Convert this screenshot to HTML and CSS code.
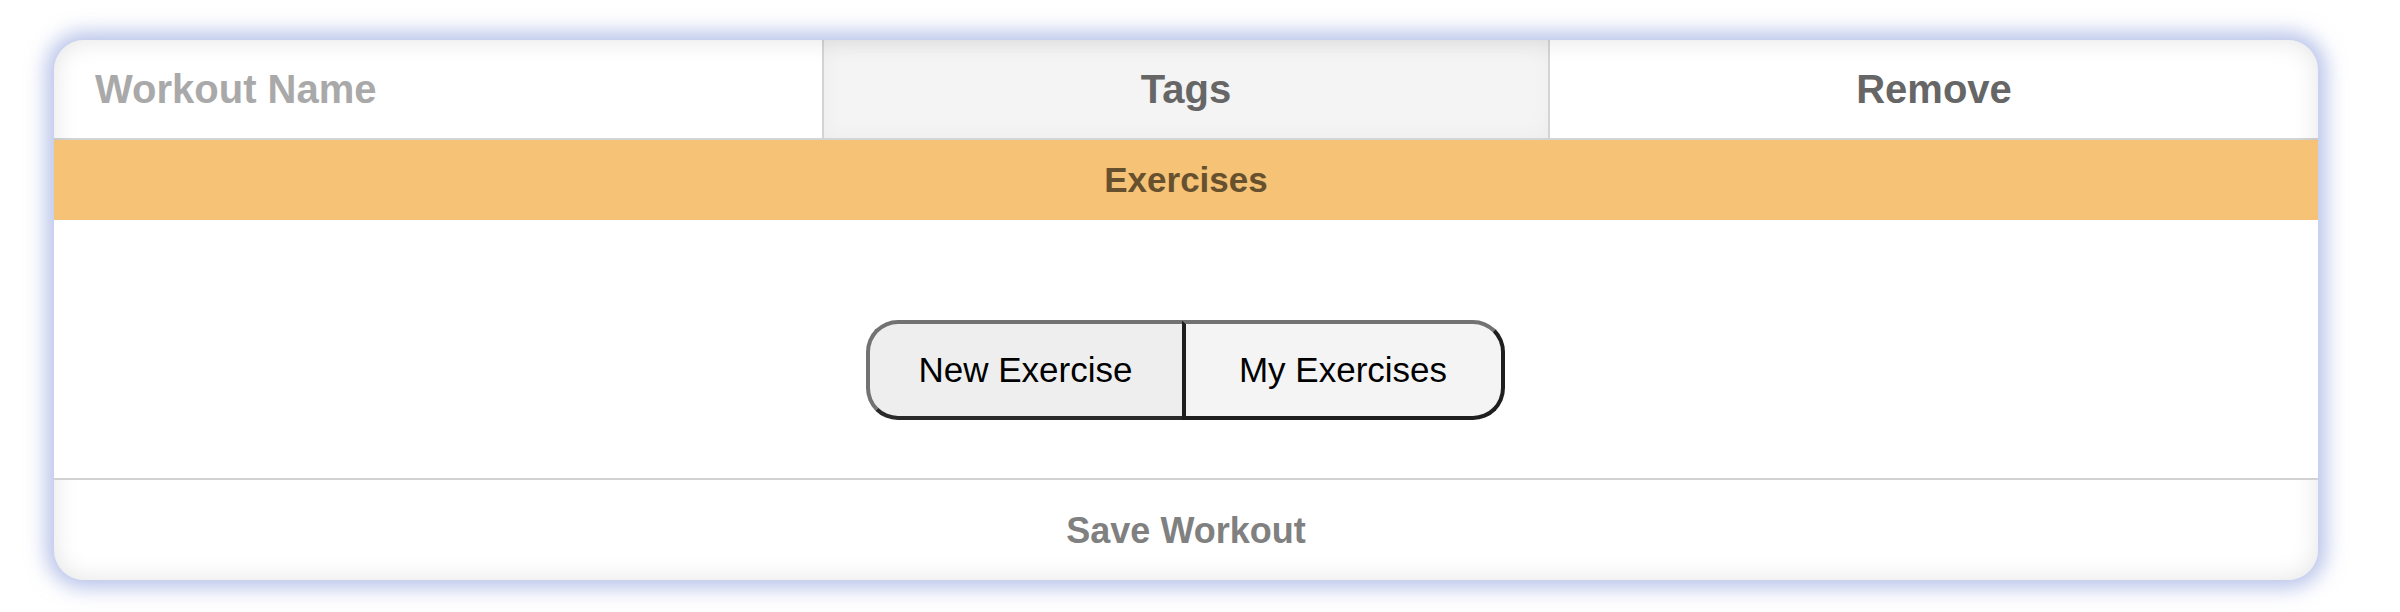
FILE: index.html
```
<!DOCTYPE html>
<html>
<head>
<meta charset="utf-8">
<link rel="stylesheet" href="styles.css">
</head>
<body>
<div class="card">
  <div class="header">
    <div class="cell cell-name">Workout Name</div>
    <div class="cell cell-tags">Tags</div>
    <div class="cell cell-remove">Remove</div>
  </div>
  <div class="section-bar">Exercises</div>
  <div class="content">
    <div class="btn-group">
      <div class="btn btn-new">New Exercise</div>
      <div class="btn btn-mine">My Exercises</div>
    </div>
  </div>
  <div class="footer">Save Workout</div>
</div>
</body>
</html>
```
FILE: styles.css
```
html, body {
  margin: 0;
  padding: 0;
  background: #ffffff;
  font-family: "Liberation Sans", Arial, sans-serif;
}
body {
  padding: 40px 0 0 54px;
  height: 612px;
  box-sizing: border-box;
}
.card {
  width: 2264px;
  height: 540px;
  border-radius: 30px;
  overflow: hidden;
  background: #ffffff;
  display: flex;
  flex-direction: column;
  box-shadow: 0 0 20px 8px rgba(140, 158, 220, 0.62);
  position: relative;
}
.card::after {
  content: "";
  position: absolute;
  inset: 0;
  border-radius: 30px;
  box-shadow: inset 0 0 26px rgba(0, 0, 0, 0.11);
  pointer-events: none;
}
.header {
  display: grid;
  grid-template-columns: 768px 728px 768px;
  height: 98px;
  border-bottom: 2px solid #d4d4d4;
  flex: none;
}
.cell {
  display: flex;
  align-items: center;
  font-size: 40px;
  font-weight: bold;
  color: #666666;
}
.cell-name {
  color: #a9a9a9;
  padding-left: 41px;
}
.cell-tags {
  justify-content: center;
  background: rgba(0, 0, 0, 0.045);
  border-left: 2px solid #d4d4d4;
  border-right: 2px solid #d4d4d4;
  box-shadow: inset 0 0 22px rgba(0, 0, 0, 0.035);
}
.cell-remove {
  justify-content: center;
}
.section-bar {
  height: 80px;
  background: #f5c276;
  color: #66502e;
  font-size: 35px;
  font-weight: bold;
  display: flex;
  align-items: center;
  justify-content: center;
  flex: none;
  position: relative;
  z-index: 1;
}
.content {
  height: 260px;
  box-sizing: border-box;
  padding-top: 100px;
  display: flex;
  justify-content: center;
  align-items: flex-start;
  background: #ffffff;
  border-bottom: 2px solid #d2d2d2;
  flex: none;
  position: relative;
  z-index: 1;
}
.btn-group {
  display: grid;
  grid-template-columns: 316px 323px;
  height: 100px;
  margin-left: -2px;
}
.btn {
  display: flex;
  align-items: center;
  justify-content: center;
  font-size: 35px;
  color: #000000;
  box-sizing: border-box;
}
.btn-new {
  background: #eeeeee;
  border: 4px solid #727272;
  border-right: none;
  border-bottom-color: #2a2a2a;
  border-radius: 32px 0 0 32px;
}
.btn-mine {
  background: #f4f4f4;
  border: 4px solid #1f1f1f;
  border-top-color: #727272;
  border-radius: 0 32px 32px 0;
}
.footer {
  flex: 1;
  display: flex;
  align-items: center;
  justify-content: center;
  font-size: 36px;
  font-weight: bold;
  color: #808080;
  padding-top: 2px;
}
```
